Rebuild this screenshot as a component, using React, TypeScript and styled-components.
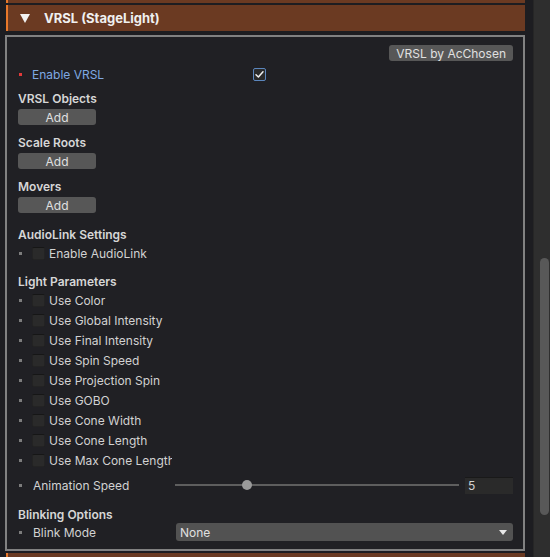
import React, { useState } from 'react';
import styled, { createGlobalStyle } from 'styled-components';

const GlobalStyle = createGlobalStyle`
  html, body {
    margin: 0;
    padding: 0;
    background: #1f1f23;
  }
  body {
    font-family: Inter, "Noto Sans", sans-serif;
    font-size: 12px;
    color: #d2d2d2;
  }
`;

const Page = styled.div`
  width: 550px;
  height: 557px;
  display: flex;
  overflow: hidden;
  background: #1d1d21;
`;

const Main = styled.div`
  width: 533px;
  display: flex;
  flex-direction: column;
  padding-left: 5px;
  padding-right: 8px;
  box-sizing: border-box;
`;

const Scrollbar = styled.div`
  width: 17px;
  background: #2e2e2e;
  border-left: 1px solid #262626;
  box-sizing: border-box;
  padding: 258px 1px 42px 6px;
  display: flex;
`;

const Thumb = styled.div`
  flex: 1;
  background: #585858;
  border-radius: 5px;
`;

const HeaderBar = styled.div<{ $height: number }>`
  height: ${({ $height }) => $height}px;
  margin-left: 1px;
  background: #6b3a22;
  border-left: 2px solid #e8782a;
  display: flex;
  align-items: center;
  gap: 14px;
  padding-left: 12px;
  font-weight: 700;
  font-size: 13px;
  color: #f0f0f0;
  flex-shrink: 0;
`;

const Arrow = styled.span`
  width: 0;
  height: 0;
  border-left: 5px solid transparent;
  border-right: 5px solid transparent;
  border-top: 9px solid #f2f2f2;
`;

const Panel = styled.div`
  margin: 4px 0 2px;
  height: 516px;
  border: 2px solid #818181;
  background: #202024;
  box-sizing: border-box;
  padding: 8px 10px 0 11px;
  display: flex;
  flex-direction: column;
  flex-shrink: 0;
`;

const TopRow = styled.div`
  display: flex;
  justify-content: flex-end;
`;

const Button = styled.div<{ $width?: number }>`
  height: 16px;
  ${({ $width }) => ($width ? `width: ${$width}px;` : 'padding: 0 7px;')}
  background: #575757;
  border-radius: 3px;
  color: #e0e0e0;
  font-size: 12px;
  display: flex;
  align-items: center;
  justify-content: center;
  box-sizing: border-box;
`;

const Heading = styled.div<{ $top: number }>`
  margin-top: ${({ $top }) => $top}px;
  height: 18px;
  display: flex;
  align-items: center;
  font-weight: 600;
  color: #d6d6d6;
`;

const Row = styled.div<{ $top?: number }>`
  margin-top: ${({ $top }) => $top ?? 0}px;
  height: 20px;
  display: flex;
  align-items: center;
`;

const Bullet = styled.span<{ $red?: boolean; $gap: number }>`
  width: 3px;
  height: 3px;
  margin-left: 1px;
  margin-right: ${({ $gap }) => $gap}px;
  background: ${({ $red }) => ($red ? '#e23a3a' : '#7c7c7c')};
  flex-shrink: 0;
`;

const Box = styled.span<{ $checked?: boolean }>`
  width: 13px;
  height: 13px;
  margin-right: ${({ $checked }) => ($checked ? 0 : 4)}px;
  box-sizing: border-box;
  background: #2a2a2a;
  border: 1px solid ${({ $checked }) => ($checked ? '#5b86bd' : '#232323')};
  border-top-color: ${({ $checked }) => ($checked ? '#5b86bd' : '#161616')};
  border-radius: 2px;
  display: flex;
  align-items: center;
  justify-content: center;
  flex-shrink: 0;
`;

const Label = styled.span<{ $width: number; $color?: string }>`
  width: ${({ $width }) => $width}px;
  overflow: hidden;
  white-space: nowrap;
  color: ${({ $color }) => $color ?? '#d2d2d2'};
  flex-shrink: 0;
`;

const Slider = styled.div`
  width: 284px;
  height: 20px;
  position: relative;
  display: flex;
  align-items: center;
`;

const Track = styled.div`
  flex: 1;
  height: 2px;
  background: #5e5e5e;
`;

const Knob = styled.div`
  position: absolute;
  left: 67px;
  top: 5px;
  width: 10px;
  height: 10px;
  border-radius: 50%;
  background: #9a9a9a;
`;

const NumberField = styled.div`
  margin-left: 6px;
  width: 48px;
  height: 17px;
  box-sizing: border-box;
  background: #2a2a2a;
  border-top: 1px solid #191919;
  padding-left: 3px;
  display: flex;
  align-items: center;
  color: #d2d2d2;
`;

const Select = styled.div`
  margin-left: 1px;
  width: 337px;
  height: 18px;
  box-sizing: border-box;
  background: #525252;
  border-radius: 3px;
  padding: 0 6px 0 4px;
  display: flex;
  align-items: center;
  justify-content: space-between;
  color: #e0e0e0;
`;

const Caret = styled.span`
  width: 0;
  height: 0;
  border-left: 4px solid transparent;
  border-right: 4px solid transparent;
  border-top: 5px solid #e8e8e8;
`;

const Check = () => (
  <svg width="11" height="11" viewBox="0 0 11 11">
    <path d="M2 5.8 L4.4 8 L9 2.8" fill="none" stroke="#f0f0f0" strokeWidth="1.5" strokeLinecap="round" strokeLinejoin="round" />
  </svg>
);

const lightParams = [
  'Use Color',
  'Use Global Intensity',
  'Use Final Intensity',
  'Use Spin Speed',
  'Use Projection Spin',
  'Use GOBO',
  'Use Cone Width',
  'Use Cone Length',
  'Use Max Cone Length',
];

const ToggleRow = ({ label, top }: { label: string; top?: number }) => (
  <Row $top={top}>
    <Bullet $gap={10} />
    <Box />
    <Label $width={123}>{label}</Label>
  </Row>
);

export default function App() {
  const [enabled] = useState(true);

  return (
    <>
      <GlobalStyle />
      <Page>
        <Main>
          <HeaderBar $height={3} style={{ marginBottom: 2 }} />
          <HeaderBar $height={26}>
            <Arrow />
            VRSL (StageLight)
          </HeaderBar>
          <Panel>
            <TopRow>
              <Button>VRSL by AcChosen</Button>
            </TopRow>
            <Row $top={3}>
              <Bullet $red $gap={10} />
              <Label $width={221} $color="#7fa8e2">Enable VRSL</Label>
              <Box $checked={enabled}>{enabled && <Check />}</Box>
            </Row>
            <Heading $top={5}>VRSL Objects</Heading>
            <Button $width={78} style={{ marginTop: 2 }}>Add</Button>
            <Heading $top={8}>Scale Roots</Heading>
            <Button $width={78} style={{ marginTop: 2 }}>Add</Button>
            <Heading $top={8}>Movers</Heading>
            <Button $width={78} style={{ marginTop: 2 }}>Add</Button>
            <Heading $top={12}>AudioLink Settings</Heading>
            <ToggleRow label="Enable AudioLink" />
            <Heading $top={9}>Light Parameters</Heading>
            {lightParams.map((p) => (
              <ToggleRow key={p} label={p} />
            ))}
            <Row $top={5}>
              <Bullet $gap={11} />
              <Label $width={142}>Animation Speed</Label>
              <Slider>
                <Track />
                <Knob />
              </Slider>
              <NumberField>5</NumberField>
            </Row>
            <Heading $top={10}>Blinking Options</Heading>
            <Row $top={-1}>
              <Bullet $gap={11} />
              <Label $width={142}>Blink Mode</Label>
              <Select>
                None
                <Caret />
              </Select>
            </Row>
          </Panel>
          <HeaderBar $height={10} />
        </Main>
        <Scrollbar>
          <Thumb />
        </Scrollbar>
      </Page>
    </>
  );
}
